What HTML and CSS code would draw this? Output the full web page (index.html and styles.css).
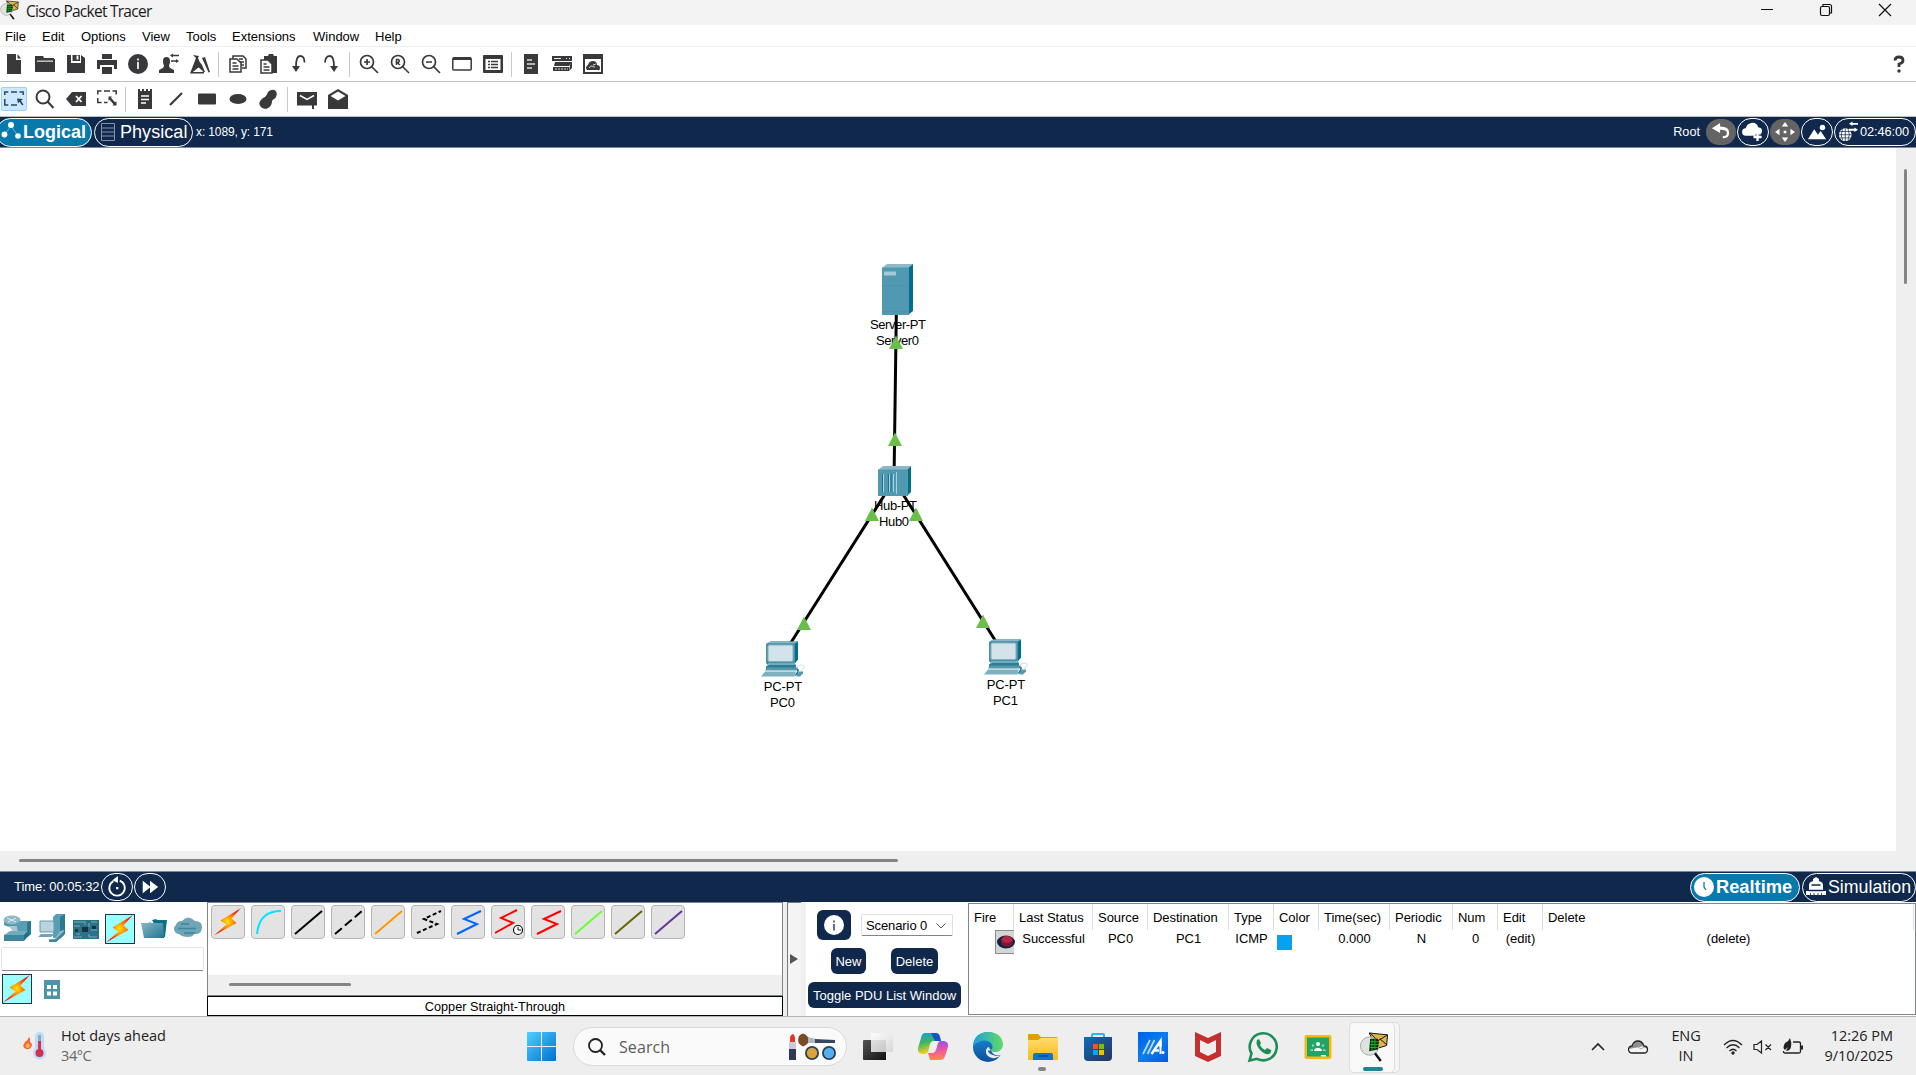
FILE: index.html
```html
<!DOCTYPE html>
<html lang="en">
<head>
<meta charset="utf-8">
<title>Cisco Packet Tracer</title>
<link rel="stylesheet" href="styles.css">
</head>
<body>
<svg class="defs" aria-hidden="true">
  <defs>
    <radialGradient id="boltFill"><stop offset="0" stop-color="#ffe600"/><stop offset=".45" stop-color="#ff8a00"/><stop offset="1" stop-color="#f51414"/></radialGradient>
    <linearGradient id="teal" x2="1" y2="1"><stop offset="0" stop-color="#8ab9c9"/><stop offset="1" stop-color="#1f7690"/></linearGradient>
    <linearGradient id="winFill" x2="1" y2="1"><stop offset="0" stop-color="#4fd0ff"/><stop offset="1" stop-color="#0070d0"/></linearGradient>
    <linearGradient id="darkFill" x2="1" y2="1"><stop offset="0" stop-color="#555"/><stop offset="1" stop-color="#111"/></linearGradient>
    <linearGradient id="glassFill" x2="1" y2="1"><stop offset="0" stop-color="#fff"/><stop offset="1" stop-color="#d4d4d4"/></linearGradient>
    <linearGradient id="copA" x2=".3" y2="1"><stop offset="0" stop-color="#12a0e0"/><stop offset=".5" stop-color="#3fb560"/><stop offset="1" stop-color="#ffd21a"/></linearGradient>
    <linearGradient id="copB" x2="0" y2="1"><stop offset="0" stop-color="#9a50e8"/><stop offset=".5" stop-color="#f0569a"/><stop offset="1" stop-color="#ff8a50"/></linearGradient>
    <linearGradient id="edgeA" x2="1" y2="0"><stop offset="0" stop-color="#1f9fe0"/><stop offset="1" stop-color="#62dc62"/></linearGradient>
    <linearGradient id="edgeB" x2="0" y2="1"><stop offset="0" stop-color="#1b8fd8"/><stop offset="1" stop-color="#0d4f9c"/></linearGradient>
    <linearGradient id="folder" x2="0" y2="1"><stop offset="0" stop-color="#ffdc6c"/><stop offset="1" stop-color="#fbb917"/></linearGradient>
    <linearGradient id="store" x2="1" y2="1"><stop offset="0" stop-color="#0f6cb8"/><stop offset="1" stop-color="#28325c"/></linearGradient>
    <linearGradient id="asus" x2="1" y2="1"><stop offset="0" stop-color="#0060ea"/><stop offset=".5" stop-color="#0a7df0"/><stop offset="1" stop-color="#005be0"/></linearGradient>
    <symbol id="bolt" viewBox="0 0 30 30"><path d="M28 1L7.500 13.500l6 4L1 28.500 23.500 16l-5-4.500z" fill="url(#boltFill)"/></symbol>
    <symbol id="tracer" viewBox="0 0 30 31"><path d="M10 1l19 2-1 11-10 3z" fill="#e3b44c" stroke="#111"/><path d="M11 1l8 8 10-6M28 13l-7-6" fill="none" stroke="#111"/><circle cx="10.500" cy="14.500" r="9.500" fill="#dfe3df" stroke="#a9aaa6"/><path d="M11 7l8 0 1 4-1 7-9 2z" fill="#062b08"/><path d="M13 8v11M16 7v11M11 10h8M11 13h9M11 16h8" stroke="#1fd02a" stroke-width=".8"/><path d="M16 22l6 8" stroke="#111" stroke-width="2.500"/></symbol>
    <symbol id="pc" viewBox="0 0 46 38"><path d="M6 3l4-2h27v18l-4 5H6z" fill="#006f8a"/><path d="M5 3h29v20H5z" fill="#4a90a7"/><path d="M5 3l4-2h28l-3 2z" fill="#8ab4c4"/><rect x="7" y="4.500" width="25" height="16.500" rx="1.500" fill="#d4e3ea" stroke="#80afbf"/><path d="M7 23h27v2H7z" fill="#bfd8e1"/><path d="M5 26l3-2h27v3l-3 2H5z" fill="#2c7e97"/><path d="M4 31h31l-2 5H0z" fill="#7eb0c0"/><path d="M4 30h32l1-3H6z" fill="#5797ab"/><path d="M33 36l3-5v-3l2 1-1 5z" fill="#2c7e97"/><path d="M38 31h4v2l-3 3h-4z" fill="#5799ae"/><path d="M36 26c3-2 8-2 7 1s-3 2-4 4" fill="none" stroke="#c4d5dc" stroke-width=".8"/></symbol>
  </defs>
</svg>

<header class="titlebar">
  <svg class="app-icon" viewBox="0 0 30 31"><use href="#tracer"/></svg>
  <span class="app-title">Cisco Packet Tracer</span>
  <div class="win-controls">
    <svg viewBox="0 0 14 14"><path d="M1 6.500h12" stroke="#111" fill="none"/></svg>
    <svg viewBox="0 0 14 14" fill="none" stroke="#111" stroke-width="1.200"><rect x="1.500" y="3.500" width="9" height="9" rx="1.500"/><path d="M4 3V1.500h6.500a2 2 0 0 1 2 2V10H11"/></svg>
    <svg viewBox="0 0 14 14"><path d="M1 1l12 12M13 1L1 13" stroke="#111" stroke-width="1.200"/></svg>
  </div>
</header>

<nav class="menubar"><span class="m-file">File</span><span class="m-edit">Edit</span><span class="m-opt">Options</span><span class="m-view">View</span><span class="m-tools">Tools</span><span class="m-ext">Extensions</span><span class="m-win">Window</span><span>Help</span></nav>

<div class="toolbar">
  <i class="tool"><svg viewBox="0 0 20 20"><path d="M3 0h9v6h5v14H3zM13.500 0L17 4.500h-3.500z"/></svg></i>
  <i class="tool"><svg viewBox="0 0 20 20"><path d="M0 2h8l1 2h10v3H0zM0 5h20v13H0z"/><path d="M2 6.500h16v1.300H2z" fill="#ddd"/></svg></i>
  <i class="tool"><svg viewBox="0 0 20 20"><path d="M1 1h4v8h10V1l4 3v15H1zM6.500 1H14v6H6.500z"/><path d="M10.500 1.500h2v4h-2z" fill="#fff"/></svg></i>
  <i class="tool"><svg viewBox="0 0 20 20"><path d="M5 0h10v5H5zM0 6h20v9h-3v-4H3v4H0zM5 13h10v7H5z"/></svg></i>
  <i class="tool"><svg viewBox="0 0 20 20"><circle cx="10" cy="10" r="10"/><path d="M9 4.500h2v2H9zM9 8h2v7H9z" fill="#ddd"/></svg></i>
  <i class="tool"><svg viewBox="0 0 20 20"><path d="M4 7a3.500 4 0 0 1 7 0c0 3-1 4-1 5l1 2 4 2v3H0v-3l4-2 1-2c0-1-1-2-1-5zM11 1.500l3-2v1.300h6v1.500h-6v1.200zM20 7l-3-2v1.300h-5v1.500h5V9z"/></svg></i>
  <i class="tool"><svg viewBox="0 0 20 20"><path d="M3 1l6 1-1 2 6 14-6-5-2 2-3 3h11v1.500H0L6 4zM12 4l3-1 5 15-1.500.500zM9 7l3 4 3 7h-2z"/><path d="M6 5L4 17l5-4z"/></svg></i>
  <b class="sep"></b>
  <i class="tool"><svg viewBox="0 0 20 20" fill="none" stroke="#39393b" stroke-width="1.500"><path d="M5 5V2h10l3 3v9h-4M11 5h4M11 8h5M13 11h3"/><path d="M2 5h7l4 4v9H2z" fill="#fff"/><path d="M4.500 9h4M4.500 12h6M4.500 15h6"/></svg></i>
  <i class="tool"><svg viewBox="0 0 20 20"><path d="M5 2h4l1-2h4l1 2h3v17H5z"/><path d="M2 6h7l4 4v9H2z" fill="#fff" stroke="#39393b" stroke-width="1.500"/><path d="M4.500 10h3M4.500 13h6M4.500 16h6" stroke="#39393b" stroke-width="1.300"/></svg></i>
  <i class="tool"><svg viewBox="0 0 20 20"><path d="M14.500 8.500C14.500 4 13 2 10 2S6 5 6 13" fill="none" stroke="#39393b" stroke-width="1.800"/><path d="M2 12h8l-4 6z"/></svg></i>
  <i class="tool"><svg viewBox="0 0 20 20"><path d="M4 8.500C4 4 6 2 9 2s4 3 4 11" fill="none" stroke="#39393b" stroke-width="1.800"/><path d="M9 12h8l-4 6z"/></svg></i>
  <b class="sep"></b>
  <i class="tool"><svg viewBox="0 0 20 20" fill="none" stroke="#39393b" stroke-width="1.700"><circle cx="8" cy="8" r="6.500"/><path d="M12.500 12.500L19 19M5 8h6M8 5v6" /></svg></i>
  <i class="tool"><svg viewBox="0 0 20 20" fill="none" stroke="#39393b" stroke-width="1.700"><circle cx="8" cy="8" r="6.500"/><path d="M12.500 12.500L19 19M6.500 11V5.500h2q1.500 1.500 0 3H7l3 2.500" stroke-width="1.500"/></svg></i>
  <i class="tool"><svg viewBox="0 0 20 20" fill="none" stroke="#39393b" stroke-width="1.700"><circle cx="8" cy="8" r="6.500"/><path d="M12.500 12.500L19 19M5 8h6"/></svg></i>
  <i class="tool"><svg viewBox="0 0 20 20"><rect x=".8" y="4" width="18.400" height="12" rx="1" fill="#fff" stroke="#39393b" stroke-width="1.500"/><path d="M1 3h18v3H1z"/></svg></i>
  <i class="tool"><svg viewBox="0 0 20 20"><rect y="1" width="20" height="18" rx="1"/><path d="M2.500 5h15v11h-15z" fill="#fff"/><path d="M5 7.500h2M8 7.500h7M5 10.500h2M8 10.500h7M5 13.500h2M8 13.500h7" stroke="#39393b" stroke-width="1.500"/></svg></i>
  <b class="sep"></b>
  <i class="tool"><svg viewBox="0 0 20 20"><path d="M3 0h14v20H3z"/><path d="M6 6h5M6 10h8M6 14h5" stroke="#ddd" stroke-width="1.300"/></svg></i>
  <i class="tool"><svg viewBox="0 0 20 20"><path d="M0 2h20v5H0zM3 8h17l-3 4H2zM1 13h16v4H1zM18 11l2-3v6l-3 3z"/><path d="M2 4.500h7M14 4.500h1M17 4.500h1" stroke="#eee"/><path d="M3 15h13" stroke="#ddd" stroke-dasharray="2 1"/></svg></i>
  <i class="tool"><svg viewBox="0 0 20 20"><path d="M0 0h20v20H0z"/><path d="M2 5h16v13H2z" fill="#fff"/><path d="M4 16a3 3 0 0 1 1-5q1-4 5-4 4 0 4 4 3 0 3 3t-2 2z"/><path d="M6 14q1-2 3-2 1 1 3 1M10 11l3-1" stroke="#fff" stroke-width=".8" fill="none"/></svg></i>
  <svg class="help" viewBox="0 0 12 18"><path d="M2 5.500Q2 2 6 2t4 3.500Q10 8 6 9v3" fill="none" stroke="#39393b" stroke-width="2.800"/><circle cx="6" cy="16" r="1.700" fill="#39393b"/></svg>
</div>

<div class="toolbar">
  <i class="tool active"><svg viewBox="0 0 20 20"><path d="M.8 6V3h3.500M7 3h6M15.500 3h3.700v3M.8 10v6h3.500M7 16h6" fill="none" stroke="#28475e" stroke-width="1.500"/><path d="M13 9.500l6 .5-2 1.800 2.500 3.700-1.300 1-2.700-3.700-1.500 1.700z" fill="#28475e"/></svg></i>
  <i class="tool"><svg viewBox="0 0 20 20" fill="none" stroke="#39393b" stroke-width="2"><circle cx="8" cy="8" r="6.500"/><path d="M12.500 12.500L18.500 19"/></svg></i>
  <i class="tool"><svg viewBox="0 0 20 20"><path d="M0 10l6-7h14v14H6z"/><path d="M10 7l5.500 6M15.500 7L10 13" stroke="#fff" stroke-width="1.800"/></svg></i>
  <i class="tool"><svg viewBox="0 0 20 20"><path d="M.8 5.500V2h3.700M7 2h6M15.500 2h3.700v3.500M.8 9v4.500h3.700M7 13.500h3.500" fill="none" stroke="#39393b" stroke-width="1.500"/><path d="M11.500 7.500l3.500 0-1 1.200 4 4.500 1.500-1v4.300h-4l1-1.300-4-4.500-1 1z"/></svg></i>
  <b class="sep"></b>
  <i class="tool"><svg viewBox="0 0 20 20"><path d="M3 0h2v2h2V0h2v2h2V0h2v2h2V0h2v20H3z"/><path d="M6 7h8M6 10.500h8M6 14h5" stroke="#fff" stroke-width="1.300"/></svg></i>
  <i class="tool"><svg viewBox="0 0 20 20"><path d="M4 16L16 4" stroke="#39393b" stroke-width="2.200"/></svg></i>
  <i class="tool"><svg viewBox="0 0 20 20"><rect x="1" y="4.500" width="18" height="11" rx="1"/></svg></i>
  <i class="tool"><svg viewBox="0 0 20 20"><ellipse cx="10" cy="10" rx="8.500" ry="5"/></svg></i>
  <i class="tool"><svg viewBox="0 0 20 20"><path d="M9 3c5-5 11-1 8 5-1 2-3 2-4 4 0 7-7 10-11 6s0-8 4-10q2-2 3-5z"/></svg></i>
  <b class="sep"></b>
  <i class="tool"><svg viewBox="0 0 20 20"><path d="M0 3h20v13.500h-3V20h-2v-3.500H0z"/><path d="M3 6.500l7 4 7-4" fill="none" stroke="#fff" stroke-width="1.500"/></svg></i>
  <i class="tool"><svg viewBox="0 0 20 20"><path d="M0 6l10-6 10 6v14H0z"/><path d="M2.500 7L10 2.500 17.500 7 10 11.500z" fill="#fff"/></svg></i>
</div>

<div class="navbar top">
  <div class="pill mode on logical"><svg viewBox="0 0 20 20" fill="#fff"><path d="M4 12l6-8 7 10" fill="none" stroke="#fff" stroke-width="1" opacity=".4"/><circle cx="3.500" cy="12.500" r="2.900"/><circle cx="10" cy="3" r="3"/><circle cx="17" cy="14" r="2.800"/></svg><span>Logical</span></div>
  <div class="pill mode physical"><svg viewBox="0 0 20 20" fill="none" stroke="#8492ac"><path d="M3.500 1.500h13v17h-13zM3.500 6h13M3.500 10h13M3.500 14h13" /></svg><span>Physical</span></div>
  <span class="coords">x: 1089, y: 171</span>
  <span class="root">Root</span>
  <div class="nav-actions">
    <div class="round gray"><svg viewBox="0 0 22 22"><path d="M1 7l9-6v4q10 0 10 7 0 6-7 6v-2.500q4.500 0 4.500-3.500T10 8.500V12z" fill="#fff"/></svg></div>
    <div class="round"><svg viewBox="0 0 22 22"><path d="M3 15a4 4 0 0 1 0-8q1-5 6-6 6-1 8 5 4 0 4 4 0 3-3 5v-2h-4v2z" fill="#fff"/><path d="M16 12v9M11.500 16.500h9" stroke="#fff" stroke-width="2.600"/></svg></div>
    <div class="round gray"><svg viewBox="0 0 22 22" fill="#fff"><path d="M11 0l3.500 5h-7zM11 22l3.500-5h-7zM0 11l5-3.500v7zM22 11l-5-3.500v7zM9.500 9.500h3v3h-3z"/></svg></div>
    <div class="round"><svg viewBox="0 0 22 22" fill="#fff"><path d="M1 19l7-11 4 6 3-4 6 9z"/><circle cx="17" cy="6" r="3"/></svg></div>
    <div class="pill clock-pill"><svg viewBox="0 0 22 22"><circle cx="8" cy="14" r="7" fill="#fff"/><path d="M1 14h14M2 10.500h12M2 17.500h12M8 7v14M5 8q-3 6 0 12M11 8q3 6 0 12" fill="none" stroke="#10284b" stroke-width=".8"/><path d="M12 2l4-2.500V1h6v2h-6v1.500zM22 8.500L18 6v1.500h-6v2h6V11z" fill="#fff"/></svg><span>02:46:00</span></div>
  </div>
</div>

<main class="workspace">
  <svg class="topology" viewBox="0 148 1896 703">
    <g stroke="#000" stroke-width="3"><path d="M896.500 300L894 480M894 480L787.500 648M894 480L1000 648"/></g>
    <g>
      <path d="M882 268l5-4h26l-5 4z" fill="#8cb8c8"/><path d="M908 268l5-4v47l-5 4z" fill="#006f8a"/><path d="M882 267.500h27V315h-27z" fill="#5199b0"/><path d="M884 271.500h12v4h-12z" fill="#a4cad8"/><path d="M882 286h27M882 311.500h27" stroke="#3f89a2" stroke-width=".4"/>
      <path d="M878 470l5-4h28l-4 4z" fill="#8cb8c8"/><path d="M907 470l4-4v26l-4 4z" fill="#006f8a"/><path d="M878 469.500h30V496h-30z" fill="#5199b0"/><path d="M882.500 474v18M888.500 474v18M891 474v18" stroke="#1d738d"/><path d="M883.500 474v18M889.500 474v18M893.500 474v18M896.500 472v22" stroke="#b9d8e2" stroke-width=".9"/>
      <use href="#pc" x="761" y="640.500" width="46" height="38"/><use href="#pc" x="984" y="638.500" width="46" height="38"/>
    </g>
    <g class="node-label">
      <text x="898" y="329" textLength="56">Server-PT</text><text x="897.500" y="345" textLength="43">Server0</text>
      <text x="895.500" y="510" textLength="43">Hub-PT</text><text x="894" y="526" textLength="30">Hub0</text>
      <text x="783" y="691" textLength="38.500">PC-PT</text><text x="782.500" y="707" textLength="25">PC0</text>
      <text x="1006" y="689" textLength="38.500">PC-PT</text><text x="1005.500" y="705" textLength="25">PC1</text>
    </g>
    <g fill="#6abf4b"><path d="M896 335.500l7 13.500h-14zM895 432.500l7 13.500h-14zM872 507.500l7 13.500h-14zM916 507.500l7 13.500h-14zM804 616.500l7 13.500h-14zM983 614.500l7 13.500h-14z"/></g>
  </svg>
  <div class="vscroll"><div class="thumb"></div></div>
</main>
<div class="hscroll"><div class="thumb"></div></div>

<div class="navbar bottom">
  <span class="sim-time">Time: 00:05:32</span>
  <div class="round"><svg viewBox="0 0 22 22"><path d="M7 4.500A8.500 8.500 0 1 0 14 4" fill="none" stroke="#fff" stroke-width="2"/><path d="M6 3.500L12-1v7.500zM10 11h2.500v2.500H10z" fill="#fff"/></svg></div>
  <div class="round"><svg viewBox="0 0 22 22"><path d="M3 4l8 6.500V4l9 7-9 7v-6.500L3 18z" fill="#fff"/></svg></div>
  <div class="pill mode on realtime"><svg viewBox="0 0 20 20"><circle cx="10" cy="10" r="10" fill="#fff"/><path d="M10 5v5l2 3" fill="none" stroke="#0879ab" stroke-width="1.300"/></svg><span>Realtime</span></div>
  <div class="pill mode simulation"><svg viewBox="0 0 20 20"><path d="M0 18v-4h3V8q0-3 4-4V2l3-2 3 2v2q4 1 4 4v6h3v4z" fill="#fff"/><path d="M5.500 8h9M3 13.500h14" stroke="#10284b" stroke-width="1.400"/><path d="M4.500 16v2M8 16v2M12 16v2M15.500 16v2" stroke="#10284b" stroke-width=".8"/></svg><span>Simulation</span></div>
</div>

<section class="panel">
  <div class="devices">
    <div class="device-row">
      <svg viewBox="0 0 30 30"><path d="M2 7v4q7 4 15 0V7z" fill="#4f93a8"/><ellipse cx="10" cy="6" rx="8.500" ry="4.500" fill="#8db9c8"/><path d="M5 4l9 4M6 8l8-4" stroke="#dfecf0"/><path d="M7 12h7l4 6h-7z" fill="#a8c9d4"/><path d="M14 10l4-3h11v13l-3 3H17z" fill="#5b9db2"/><path d="M25 8l4-1v13l-4 3z" fill="#2a7a92"/><path d="M2 21l6-4h19l-5 5v5H2z" fill="#75aabb"/><path d="M2 21h20v6H2z" fill="#3d879e"/><path d="M22 21l5-5v5l-5 6z" fill="#1a7089"/></svg>
      <svg viewBox="0 0 30 30"><path d="M17 3l3-3h9v19l-5 5h-7z" fill="#5b9db2"/><path d="M26 2l3-2v20l-5 5V3z" fill="#2a7a92"/><path d="M4 7h14v11H4z" fill="#b9d4de" stroke="#5d9bb0"/><path d="M5 20h14l-4 3H2z" fill="#6da5b7"/><path d="M13 25h6l5-8 4-1v4l-8 8h-7z" fill="#8fbac8"/><path d="M20 25l8-8v4l-8 7h-7v-2z" fill="#3d879e"/></svg>
      <svg viewBox="0 0 30 30"><path d="M2 6h26v19H2z" fill="#2b7288"/><path d="M11 13h6v5h-6zM21 12h4v3h-4zM4 15h3v3H4z" fill="#123541"/><path d="M3 8h10M3 12h6M3 23h8M20 8h6M20 16h6M18 20v3h8M5 20h4M14 7v4M18 9v4" stroke="#8fb9c6" stroke-width=".8" fill="none"/></svg>
      <i class="chosen"><svg viewBox="0 0 30 30"><use href="#bolt"/></svg></i>
      <svg viewBox="0 0 30 30"><path d="M13 6l4-1 1 1h8l2 0-2 17-3 1z" fill="#0d6f88"/><path d="M2 9h7l2-1 1 1h12l1 15H5z" fill="url(#teal)"/></svg>
      <svg viewBox="0 0 30 30"><path d="M6 21a5 5 0 0 1-3-9q1-4 6-4 6-7 13 0 7 0 7 6 0 8-8 7-1 3-6 3-6 0-9-3z" fill="#6ea5b7" transform="translate(0 -1)"/><path d="M8 10h8M5 14.500h18M11 19h11" stroke="#3d849c" stroke-width="1.500"/></svg>
    </div>
    <div class="device-search"></div>
    <div class="sub-row">
      <i class="chosen"><svg viewBox="0 0 30 30"><use href="#bolt"/></svg></i>
      <svg class="grid-icon" viewBox="0 0 16 19"><path d="M0 0h16v19H0z" fill="#4d94aa"/><path d="M3 5h4v4H3zM9 5h4v4H9zM3 11.500h4v4H3zM9 11.500h4v4H9z" fill="#fff"/></svg>
    </div>
  </div>

  <div class="cables">
    <div class="cable-list">
      <div class="cable-row">
        <i><svg viewBox="0 0 30 30"><use href="#bolt"/></svg></i>
        <i><svg viewBox="0 0 30 30"><path d="M4 27Q6 4 28 4" stroke="#00e5ff"/></svg></i>
        <i><svg viewBox="0 0 30 30"><path d="M2 27L29 4" stroke="#000"/></svg></i>
        <i><svg viewBox="0 0 30 30"><path d="M2 27L29 4" stroke="#000" stroke-dasharray="9 4"/></svg></i>
        <i><svg viewBox="0 0 30 30"><path d="M2 27L29 4" stroke="#ff9800"/></svg></i>
        <i><svg viewBox="0 0 30 30"><path d="M4 26L24 17 11 12 28 4" stroke="#000" stroke-dasharray="4 2.500"/></svg></i>
        <i><svg viewBox="0 0 30 30"><path d="M4 27L24 17 11 12 28 4" stroke="#0066ff"/></svg></i>
        <i><svg viewBox="0 0 30 30"><path d="M2 26L20 16 8 11 24 3" stroke="#f00"/><circle cx="25" cy="23" r="4.500" fill="#fff" stroke="#111" stroke-width="1.200"/><path d="M25 23v-3M25 23h3" stroke="#111" stroke-width="1"/></svg></i>
        <i><svg viewBox="0 0 30 30"><path d="M4 27L24 17 11 12 28 4" stroke="#f00"/></svg></i>
        <i><svg viewBox="0 0 30 30"><path d="M2 27L29 4" stroke="#66ff33"/></svg></i>
        <i><svg viewBox="0 0 30 30"><path d="M2 27L29 4" stroke="#666600"/></svg></i>
        <i><svg viewBox="0 0 30 30"><path d="M2 27L29 4" stroke="#663399"/></svg></i>
      </div>
      <div class="cable-scroll"><div class="thumb"></div></div>
    </div>
    <div class="cable-name">Copper Straight-Through</div>
  </div>

  <div class="collapse"><svg viewBox="0 0 8 10"><path d="M0 0l8 5-8 5z" fill="#555"/></svg></div>

  <div class="scenario">
    <div class="scenario-top">
      <div class="btn info"><svg viewBox="0 0 20 20"><circle cx="10" cy="10" r="10" fill="#fff"/><path d="M9 5.500h2v2H9zM9 9h2v6.500H9z" fill="#5c6f8d"/></svg></div>
      <div class="select"><span>Scenario 0</span><svg viewBox="0 0 10 6"><path d="M.5.500L5 5 9.500.500" fill="none" stroke="#555"/></svg></div>
    </div>
    <div class="scenario-mid"><div class="btn new">New</div><div class="btn del">Delete</div></div>
    <div class="btn toggle">Toggle PDU List Window</div>
  </div>

  <div class="pdu">
    <div class="pdu-row head"><span>Fire</span><span>Last Status</span><span>Source</span><span>Destination</span><span>Type</span><span>Color</span><span>Time(sec)</span><span>Periodic</span><span>Num</span><span>Edit</span><span>Delete</span></div>
    <div class="pdu-row data"><span class="fire"><svg viewBox="0 0 19 24"><path d="M0 0h19v24H0z" fill="#8b8b8b"/><path d="M1 1h18v22H1z" fill="#d5d5d5"/><ellipse cx="11" cy="12" rx="9" ry="6.500" fill="#0d2545"/><ellipse cx="12" cy="12" rx="6" ry="4.500" fill="#7d1730"/><ellipse cx="12" cy="9.500" rx="5.500" ry="3.500" fill="#b92342"/></svg></span><span>Successful</span><span>PC0</span><span>PC1</span><span>ICMP</span><span class="swatch"><i></i></span><span>0.000</span><span>N</span><span>0</span><span class="edit">(edit)</span><span>(delete)</span></div>
  </div>
</section>

<footer class="taskbar">
  <svg class="weather" viewBox="0 0 24 30"><path d="M6 6q-1 3-4 5-4 5 1 7 5 1 6-4 0-2-2-3 1-3-1-5z" fill="#f26a3a"/><path d="M4 12q-3 5 1 5 3-1 1-4z" fill="#ffb14a"/><rect x="12" y="1" width="9" height="24" rx="4.500" fill="#bcdcf8"/><circle cx="16.500" cy="22" r="6.500" fill="#bcdcf8"/><path d="M15 4h3v8h-3z" fill="#8ea8c4"/><path d="M15 10h3v10h-3z" fill="#d9304f"/><circle cx="16.500" cy="22" r="4" fill="#d3304f"/></svg>
  <div class="weather-text"><div>Hot days ahead</div><div class="temp">34°C</div></div>
  <svg class="start" viewBox="0 0 29 29"><path d="M0 1q0-1 1-1h13v14H0zM15 0h13q1 0 1 1v13H15zM0 15h14v14H1q-1 0-1-1zM15 15h14v13q0 1-1 1H15z" fill="url(#winFill)"/></svg>
  <div class="search">
    <svg class="glass" viewBox="0 0 18 18"><circle cx="7.500" cy="7.500" r="6.500" fill="none" stroke="#222" stroke-width="1.800"/><path d="M12 12l5 5" stroke="#222" stroke-width="2.400"/></svg>
    <span>Search</span>
    <svg class="makeup" viewBox="0 0 47 28"><path d="M1 9V4q3-6 5 0v5z" fill="#e5382c"/><path d="M0 9h7v7H0z" fill="#c9ccd2"/><path d="M0 16h7v11H0z" fill="#2e3a55"/><path d="M10 3q4-5 8 0l3 4q-4 7-8 6-6-3-3-10z" fill="#7b4d25"/><path d="M19 4l8 2v4l-8 0z" fill="#aeb6c2"/><path d="M26 6l20 1v3l-20 0z" fill="#39465f"/><circle cx="23" cy="20" r="7" fill="#303d57"/><circle cx="23" cy="20" r="5.200" fill="#d8a43c"/><circle cx="40" cy="20" r="7" fill="#303d57"/><circle cx="40" cy="20" r="5.200" fill="#53b1ee"/></svg>
  </div>
  <div class="apps">
    <i><svg viewBox="0 0 30 30"><path d="M0 9q0-1 1-1h22v20H1q-1 0-1-1z" fill="url(#darkFill)"/><path d="M8 1h22v18q0 1-1 1H8z" fill="url(#glassFill)" opacity=".88"/></svg></i>
    <i><svg viewBox="0 0 30 30"><path d="M7 1h11q3 0 4 4l1 4h-7q-3 0-4 3l-2 8q-1 2-4 2H4q-5-1-4-6l3-10q1-5 4-5z" fill="url(#copA)"/><path d="M13 1h5q3 0 4 4l1 4h-6z" fill="#1655c8"/><path d="M23 9h3q5 1 4 6l-3 9q-1 4-5 4H12l-2-7h4q3 0 4-3l2-7q1-2 3-2z" fill="url(#copB)"/></svg></i>
    <i><svg viewBox="0 0 30 30"><circle cx="15" cy="15" r="15" fill="url(#edgeB)"/><path d="M0 14Q1 0 16 0q13 1 14 12 0 7-7 8-4 0-5-2 3-3 0-7Q10 5 0 14z" fill="url(#edgeA)"/><path d="M18 18q-2-1-2-3-2 0-3 3-1 6 6 8 5 1 9-3-4 2-8 0-5-1-5-5 1 1 3 0z" fill="#eee"/><path d="M30 13v9l-2 1q-8 2-10-5 1 2 5 2 6-1 7-7z" fill="#ededed"/></svg></i>
    <i><svg viewBox="0 0 30 30"><path d="M0 3q0-1 1-1h9l3 3h15q2 0 2 2v5H0z" fill="#dea005"/><path d="M0 8h10l3-2h17v21q0 1-1 1H1q-1 0-1-1z" fill="url(#folder)"/><path d="M5 28v-5q0-2 2-2h16q2 0 2 2v5z" fill="#1175c8"/><path d="M10 24h10" stroke="#0b4d91" stroke-width="1.500"/></svg><b class="dot"></b></i>
    <i><svg viewBox="0 0 30 30"><path d="M9 6V3q0-1 1-1h10q1 0 1 1v3" fill="none" stroke="#27b7ee" stroke-width="2"/><path d="M1 5h28v20q0 4-4 4H5q-4 0-4-4z" fill="url(#store)"/><path d="M10 12h5v5h-5z" fill="#f35325"/><path d="M16 12h5v5h-5z" fill="#81bc06"/><path d="M10 18h5v5h-5z" fill="#05a6f0"/><path d="M16 18h5v5h-5z" fill="#ffba08"/></svg></i>
    <i><svg viewBox="0 0 30 30"><path d="M0 0h30v30H0z" fill="url(#asus)"/><path d="M5 22L12 8M9.500 22l7-14" stroke="#b9dcff" stroke-width="1.700"/><path d="M13.500 22l9-13v6M16 18.500h5" fill="none" stroke="#fff" stroke-width="2.500"/><path d="M22.500 9v13" stroke="#fff" stroke-width="2"/><circle cx="25" cy="20.500" r="1.500" fill="#fff"/></svg></i>
    <i><svg viewBox="0 0 30 30"><path d="M2 0l13 6L28 0v24l-13 6-13-6z" fill="#c42f2f"/><path d="M7 8l8 4 8-4v12l-8 4-8-4z" fill="#eee"/></svg></i>
    <i><svg viewBox="0 0 30 30"><path d="M1.500 28.500l2-7A13.500 13.500 0 1 1 9 26.800z" fill="none" stroke="#1e8e57" stroke-width="2.600"/><path d="M9 8q2-2 3 1l1 2-1 2q2 4 5 5l2-2 4 2q1 2-2 4-3 1-8-3-6-6-4-11z" fill="#1e8e57"/></svg></i>
    <i><svg viewBox="0 0 30 30"><rect x="1.500" y="3" width="27" height="24" rx="2" fill="#f9b90c"/><path d="M4 5.500h22v19H4z" fill="#21a465"/><circle cx="15" cy="12" r="2" fill="#fff"/><circle cx="10" cy="13.500" r="1.300" fill="#8ed1b1"/><circle cx="20" cy="13.500" r="1.300" fill="#8ed1b1"/><path d="M11 19q0-3 4-3t4 3z" fill="#fff"/><path d="M7 19q0-2 3-2v2zM23 19q0-2-3-2v2z" fill="#8ed1b1"/><path d="M18 23h5v1.500h-5z" fill="#fff"/></svg></i>
    <i class="running"><svg viewBox="0 0 30 31"><use href="#tracer"/></svg><b class="bar"></b></i>
  </div>
  <svg class="chev" viewBox="0 0 14 8"><path d="M1 7l6-6 6 6" fill="none" stroke="#222" stroke-width="1.600"/></svg>
  <svg class="cloud" viewBox="0 0 20 14"><path d="M4 13a3.500 3.500 0 0 1 0-7Q6 1 10 1t6 5q3.500 0 3.500 3.500T16 13z" fill="#f5f5f5"/><path d="M1 9q0-3 4-3 2-5 6-5 3 0 5 5z" fill="#929292"/><path d="M1 8l4-2q4-1 8 3 3-3 6-1" fill="none" stroke="#777" stroke-width=".6"/><path d="M4 13a3.500 3.500 0 0 1 0-7Q6 1 10 1t6 5q3.500 0 3.500 3.500T16 13z" fill="none" stroke="#222" stroke-width="1.300"/></svg>
  <div class="lang"><div>ENG</div><div>IN</div></div>
  <svg class="wifi" viewBox="0 0 20 16"><g fill="none" stroke="#222" stroke-width="1.300"><path d="M1 6q9-9 18 0M3.500 9q6.500-6.500 13 0M6.500 12q3.500-3.500 7 0"/></g><circle cx="10" cy="14" r="1.700" fill="#222"/></svg>
  <svg class="mute" viewBox="0 0 19 14"><path d="M1 4.500h3L8.500 1v12L4 9.500H1zM12.500 4.500l5.500 5.500M18 4.500L12.500 10" fill="none" stroke="#222" stroke-width="1.200"/></svg>
  <svg class="battery" viewBox="0 0 20 16"><path d="M10 3h6q1.500 0 1.500 1.500v8q0 1.500-1.500 1.500H2q-1.500 0-1.500-1.500V12" fill="none" stroke="#222" stroke-width="1.300"/><path d="M18 6.500h2v4h-2z" fill="#222"/><path d="M7-1q-1 3-5 5-3 5 0 7l3-3-2 4q4 0 5-4 1-4-1-9z" fill="#222"/></svg>
  <div class="clock"><div>12:26 PM</div><div>9/10/2025</div></div>
</footer>
</body>
</html>
```
FILE: styles.css
```css
* { box-sizing: border-box; }
html, body { margin: 0; height: 100%; overflow: hidden; }
body {
  display: flex;
  flex-direction: column;
  width: 1916px;
  height: 1075px;
  background: #fff;
  color: #000;
  font: 13px/16px "Liberation Sans", Arial, sans-serif;
  white-space: nowrap;
}
svg { display: block; flex: none; overflow: visible; }
i { font-style: normal; }
.defs { position: absolute; width: 0; height: 0; }

.titlebar { display: flex; align-items: center; flex: none; height: 25px; background: #f3f3f3; font: 15.500px/20px "Open Sans", "Noto Sans", sans-serif; }
.app-icon { width: 19px; height: 20px; margin: -5px 7px 0 0; }
.app-title { letter-spacing: -.74px; margin-top: -3px; color: #191919; }
.win-controls { display: flex; gap: 45px; margin: -5px 24px 0 auto; }
.win-controls svg { width: 14px; height: 14px; }

.menubar { display: flex; align-items: center; flex: none; height: 22px; padding: 2px 0 0 5px; border-bottom: 1px solid #eee; }
.menubar span { flex: none; }
.m-file { width: 37px; }
.m-edit { width: 39px; }
.m-opt { width: 61px; }
.m-view { width: 44px; }
.m-tools { width: 46px; }
.m-ext { width: 81px; }
.m-win { width: 62px; }

.toolbar { display: flex; align-items: center; flex: none; height: 35px; border-bottom: 1px solid #bfbfbf; padding-left: 1px; }
.tool { display: flex; align-items: center; justify-content: center; flex: none; width: 26px; height: 24px; margin-right: 5px; }
.tool svg { width: 20px; height: 20px; fill: #39393b; }
.tool svg[fill="none"] { fill: none; }
.tool.active { background: #cce8ff; outline: 1px solid #99d1ff; outline-offset: -1px; border-radius: 2px; }
.sep { width: 1px; height: 25px; margin: 0 6px 0 0; background: #c9c9c9; }
.help { width: 12px; height: 18px; margin: 0 11px 0 auto; }

.navbar { display: flex; align-items: center; flex: none; background: #10284b; color: #fff; }
.navbar.top { height: 31px; border-bottom: 1px solid #7e8794; }
.navbar.bottom { height: 31px; border-top: 1px solid #7e8794; padding-left: 14px; }
.pill { display: flex; align-items: center; flex: none; height: 29px; border: 1px solid #fff; border-radius: 14.500px; }
.mode { font-size: 18px; line-height: 20px; }
.mode svg { width: 20px; height: 20px; }
.on { background: #0879ab; font-weight: bold; }
.logical { width: 96px; margin-left: -4px; padding-left: 4px; gap: 2px; }
.physical { width: 99px; margin-left: 2px; padding-left: 3px; gap: 2px; }
.physical span { letter-spacing: .05px; }
.coords { margin-left: 3px; font-size: 12px; letter-spacing: -.12px; }
.root { margin-left: auto; margin-right: 6px; font-size: 12.700px; }
.nav-actions { display: flex; align-items: center; gap: 1px; }
.round { display: flex; align-items: center; justify-content: center; flex: none; width: 32px; height: 28px; border: 1px solid #fff; border-radius: 14px; }
.round svg { width: 20px; height: 20px; }
.round.gray { width: 30px; height: 26px; background: #646464; border: 0; }
.clock-pill { width: 82px; height: 28px; padding-left: 3px; gap: 2px; font-size: 12.800px; letter-spacing: -.1px; }
.clock-pill svg { width: 20px; height: 20px; }
.sim-time { width: 87px; letter-spacing: -.05px; }
.bottom .round + .round { margin-left: 1px; }
.realtime { width: 110px; margin-left: auto; padding-left: 3px; gap: 2px; font-size: 18.300px; }
.simulation { width: 114px; margin-left: 2px; padding-left: 3px; gap: 2px; font-size: 17.800px; }

.workspace { display: flex; flex: none; height: 703px; }
.topology { width: 1896px; height: 703px; }
.node-label { font-size: 13px; text-anchor: middle; }
.vscroll { width: 20px; background: #efefef; padding: 21px 0 0 8px; }
.vscroll .thumb { width: 3px; height: 115px; border-radius: 2px; background: #858585; }
.hscroll { flex: none; height: 20px; background: #efefef; padding: 8px 0 0 19px; }
.hscroll .thumb { width: 879px; height: 3px; border-radius: 2px; background: #858585; }

.panel { display: flex; flex: none; height: 115px; border-bottom: 1px solid #b5b5b5; background: #fff; }
.devices { width: 207px; padding-top: 12px; }
.device-row { display: flex; align-items: center; gap: 4.300px; padding-left: 2px; }
.device-row svg, .sub-row .chosen svg { width: 30px; height: 30px; }
.chosen { display: flex; flex: none; width: 30px; height: 30px; background: #9ff; outline: 1px solid #234; outline-offset: -1px; }
.device-search { width: 203px; height: 24px; margin: 3px 0 0 1px; border: 1px solid #e5e5e5; border-bottom-color: #858585; border-radius: 2px; }
.sub-row { display: flex; align-items: center; gap: 12px; margin-top: 3px; padding-left: 2px; }
.grid-icon { width: 16px; height: 19px; }

.cables { width: 576px; }
.cable-list { display: flex; flex-direction: column; height: 94px; border: 1px solid #7f858e; }
.cable-row { display: flex; gap: 6px; padding: 2px 3px; flex: 1; }
.cable-row i { display: flex; align-items: center; justify-content: center; width: 34px; height: 34px; border: 1px solid #b5b5b5; border-radius: 4px; background: #e3e3e3; }
.cable-row svg { width: 30px; height: 30px; fill: none; stroke-width: 2; }
.cable-scroll { height: 20px; background: #efefef; padding: 8px 0 0 21px; }
.cable-scroll .thumb { width: 122px; height: 3px; border-radius: 2px; background: #858585; }
.cable-name { height: 20px; border: 1px solid #000; text-align: center; line-height: 20px; font-size: 12.700px; }

.collapse { display: flex; align-items: center; width: 23px; border-left: 4px solid #efefef; border-right: 5px solid #efefef; background: #f4f4f4; box-shadow: inset 1px 1px 0 #777; padding-left: 3px; }
.collapse svg { width: 8px; height: 10px; }

.scenario { display: flex; flex-direction: column; width: 162px; padding: 8px 0 0 2px; }
.btn { display: flex; align-items: center; justify-content: center; height: 26px; padding-top: 1px; border-radius: 6px; background: #10284b; color: #fff; }
.scenario-top { display: flex; align-items: center; gap: 10px; padding-left: 9px; }
.info { width: 34px; height: 30px; padding: 0; }
.info svg { width: 20px; height: 20px; }
.select { display: flex; align-items: center; justify-content: space-between; width: 92px; height: 22px; padding: 1px 6px 0 4px; border: 1px solid #e1e1e1; border-bottom-color: #858585; border-radius: 2px; letter-spacing: -.1px; }
.select svg { width: 10px; height: 6px; }
.scenario-mid { display: flex; gap: 25px; padding: 8px 0 8px 23px; }
.new { width: 35px; }
.del { width: 47px; }
.toggle { width: 153px; }

.pdu { width: 948px; height: 112px; margin-top: 1px; border: 1px solid #7f858e; }
.pdu-row { display: grid; grid-template-columns: 45px 79px 55px 81px 45px 45px 71px 63px 45px 45px 371px; letter-spacing: -.04px; }
.head span { height: 26px; padding-left: 5px; line-height: 28px; border-right: 1px solid #dedede; }
.data span { text-align: center; line-height: 18px; }
.data .fire svg { width: 19px; height: 24px; margin-left: 26px; }
.data .swatch { padding: 5px 0 0 3px; }
.swatch i { display: block; width: 15px; height: 15px; background: #08a0f0; }

.taskbar { display: flex; align-items: center; flex: none; height: 58px; padding-top: 1px; background: #eee; color: #222; font: 14.500px/20px "Open Sans", "Noto Sans", sans-serif; }
.weather { width: 24px; height: 30px; margin: -2px 0 0 23px; }
.weather-text { width: 466px; margin: -2px 0 0 14px; letter-spacing: -.02px; }
.temp { color: #666; letter-spacing: -.4px; }
.start { width: 29px; height: 29px; }
.search { display: flex; align-items: center; width: 274px; height: 39px; margin-left: 17px; padding-left: 14px; border: 1px solid #d9d9d9; border-radius: 20px; background: #fafafa; color: #5c5c5c; font-size: 16px; letter-spacing: .1px; }
.glass { width: 18px; height: 18px; margin-right: 13px; }
.makeup { width: 47px; height: 28px; margin: 0 10px 0 auto; }
.apps { display: flex; margin-left: 3px; }
.apps i { display: flex; position: relative; align-items: center; justify-content: center; width: 55px; height: 50px; }
.apps svg { width: 30px; height: 30px; }
.running::before { content: ""; position: absolute; left: 4px; top: 0; width: 44px; height: 49px; border: 1px solid #ddd; border-radius: 5px; background: #f9f9f9; box-shadow: 5px 0 0 -1px #f5f5f5, 5px 0 0 #ddd; }
.dot, .bar { position: absolute; bottom: 1px; height: 4px; border-radius: 2px; }
.apps .running svg { position: relative; left: 1px; }
.dot { width: 8px; left: 23px; background: #858585; }
.bar { width: 20px; left: 18px; background: #1f8494; }
.chev { width: 14px; height: 8px; margin-left: 191px; }
.cloud { width: 20px; height: 14px; margin-left: 23px; }
.lang { width: 40px; margin: -1px 0 0 18px; text-align: center; letter-spacing: -.1px; }
.wifi { width: 20px; height: 16px; margin-left: 17px; }
.mute { width: 19px; height: 14px; margin-left: 10px; }
.battery { width: 20px; height: 16px; margin-left: 11px; }
.clock { margin: -2px 23px 0 auto; text-align: right; letter-spacing: -.02px; }
```
